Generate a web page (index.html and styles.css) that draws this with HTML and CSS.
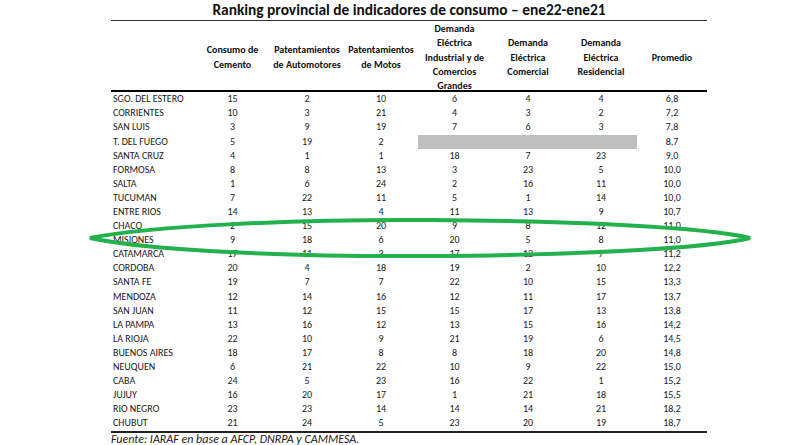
FILE: index.html
```html
<!DOCTYPE html>
<html lang="es">
<head>
<meta charset="utf-8">
<title>Ranking provincial de indicadores de consumo</title>
<link rel="stylesheet" href="styles.css">
</head>
<body>
<div class="page">
  <h1 class="title">Ranking provincial de indicadores de consumo – ene22-ene21</h1>
  <table class="rank">
    <colgroup>
      <col class="c-name"><col class="c-cem"><col class="c-aut"><col class="c-mot"><col class="c-ind"><col class="c-com"><col class="c-res"><col class="c-prom">
    </colgroup>
    <thead>
      <tr>
        <th><span class="hd"></span></th>
        <th><span class="hd">Consumo de Cemento</span></th>
        <th><span class="hd">Patentamientos de Automotores</span></th>
        <th><span class="hd">Patentamientos de Motos</span></th>
        <th><span class="hd">Demanda Eléctrica Industrial y de Comercios Grandes</span></th>
        <th><span class="hd">Demanda Eléctrica Comercial</span></th>
        <th><span class="hd">Demanda Eléctrica Residencial</span></th>
        <th><span class="hd">Promedio</span></th>
      </tr>
    </thead>
    <tbody>
      <tr><td>SGO. DEL ESTERO</td><td>15</td><td>2</td><td>10</td><td>6</td><td>4</td><td>4</td><td>6,8</td></tr>
      <tr><td>CORRIENTES</td><td>10</td><td>3</td><td>21</td><td>4</td><td>3</td><td>2</td><td>7,2</td></tr>
      <tr><td>SAN LUIS</td><td>3</td><td>9</td><td>19</td><td>7</td><td>6</td><td>3</td><td>7,8</td></tr>
      <tr><td>T. DEL FUEGO</td><td>5</td><td>19</td><td>2</td><td class="na" colspan="3"></td><td>8,7</td></tr>
      <tr><td>SANTA CRUZ</td><td>4</td><td>1</td><td>1</td><td>18</td><td>7</td><td>23</td><td>9,0</td></tr>
      <tr><td>FORMOSA</td><td>8</td><td>8</td><td>13</td><td>3</td><td>23</td><td>5</td><td>10,0</td></tr>
      <tr><td>SALTA</td><td>1</td><td>6</td><td>24</td><td>2</td><td>16</td><td>11</td><td>10,0</td></tr>
      <tr><td>TUCUMAN</td><td>7</td><td>22</td><td>11</td><td>5</td><td>1</td><td>14</td><td>10,0</td></tr>
      <tr><td>ENTRE RIOS</td><td>14</td><td>13</td><td>4</td><td>11</td><td>13</td><td>9</td><td>10,7</td></tr>
      <tr><td>CHACO</td><td>2</td><td>15</td><td>20</td><td>9</td><td>8</td><td>12</td><td>11,0</td></tr>
      <tr><td>MISIONES</td><td>9</td><td>18</td><td>6</td><td>20</td><td>5</td><td>8</td><td>11,0</td></tr>
      <tr><td>CATAMARCA</td><td>17</td><td>11</td><td>3</td><td>17</td><td>12</td><td>7</td><td>11,2</td></tr>
      <tr><td>CORDOBA</td><td>20</td><td>4</td><td>18</td><td>19</td><td>2</td><td>10</td><td>12,2</td></tr>
      <tr><td>SANTA FE</td><td>19</td><td>7</td><td>7</td><td>22</td><td>10</td><td>15</td><td>13,3</td></tr>
      <tr><td>MENDOZA</td><td>12</td><td>14</td><td>16</td><td>12</td><td>11</td><td>17</td><td>13,7</td></tr>
      <tr><td>SAN JUAN</td><td>11</td><td>12</td><td>15</td><td>15</td><td>17</td><td>13</td><td>13,8</td></tr>
      <tr><td>LA PAMPA</td><td>13</td><td>16</td><td>12</td><td>13</td><td>15</td><td>16</td><td>14,2</td></tr>
      <tr><td>LA RIOJA</td><td>22</td><td>10</td><td>9</td><td>21</td><td>19</td><td>6</td><td>14,5</td></tr>
      <tr><td>BUENOS AIRES</td><td>18</td><td>17</td><td>8</td><td>8</td><td>18</td><td>20</td><td>14,8</td></tr>
      <tr><td>NEUQUEN</td><td>6</td><td>21</td><td>22</td><td>10</td><td>9</td><td>22</td><td>15,0</td></tr>
      <tr><td>CABA</td><td>24</td><td>5</td><td>23</td><td>16</td><td>22</td><td>1</td><td>15,2</td></tr>
      <tr><td>JUJUY</td><td>16</td><td>20</td><td>17</td><td>1</td><td>21</td><td>18</td><td>15,5</td></tr>
      <tr><td>RIO NEGRO</td><td>23</td><td>23</td><td>14</td><td>14</td><td>14</td><td>21</td><td>18,2</td></tr>
      <tr><td>CHUBUT</td><td>21</td><td>24</td><td>5</td><td>23</td><td>20</td><td>19</td><td>18,7</td></tr>
    </tbody>
  </table>
  <p class="source">Fuente: IARAF en base a AFCP, DNRPA y CAMMESA.</p>
</div>
<svg class="highlight" width="789" height="445" viewBox="0 0 789 445" aria-hidden="true">
  <path d="M90,238 C150,226 300,219 430,220 C570,221 705,227 750,238 C705,249 570,255 430,256 C300,257 150,251 90,238 Z" fill="none" stroke="#22b14c" stroke-width="4"/>
</svg>
</body>
</html>
```

FILE: styles.css
```css
html, body {
  margin: 0;
  padding: 0;
  background: #ffffff;
}

body {
  position: relative;
  width: 789px;
  height: 445px;
  overflow: hidden;
  font-family: Carlito, Lato, "Noto Sans", sans-serif;
  color: #1a1a1a;
}

.page {
  width: 596px;
  margin-left: 111px;
  padding-top: 1px;
}

.title {
  margin: 0;
  height: 19px;
  line-height: 18px;
  font-size: 15.4px;
  font-weight: 700;
  text-align: center;
  border-bottom: 1px solid #333;
  color: #111;
}

.rank {
  width: 596px;
  table-layout: fixed;
  border-collapse: collapse;
  border-spacing: 0;
}

.c-name { width: 84px; }
.c-cem { width: 75px; }
.c-aut { width: 74px; }
.c-mot { width: 74px; }
.c-ind { width: 73px; }
.c-com { width: 74px; }
.c-res { width: 72px; }
.c-prom { width: 70px; }

.rank thead th {
  height: 68px;
  padding: 1px 0 0 0;
  font-size: 10px;
  font-weight: 700;
  text-align: center;
  vertical-align: middle;
  border-bottom: 2.5px solid #000;
  color: #111;
}

.hd {
  display: block;
  line-height: 14.25px;
  margin-bottom: -3px;
}

.rank tbody td {
  height: 14.1px;
  padding: 0;
  font-size: 10px;
  line-height: 14.1px;
  text-align: center;
  white-space: nowrap;
  color: #1a1a1a;
}

.rank tbody td:first-child {
  text-align: left;
  padding-left: 2px;
}

.rank tbody tr:last-child td {
  border-bottom: 2px solid #222;
}

.rank tbody td.na {
  background: #bfbfbf;
}

.source {
  margin: 0;
  padding-top: 0;
  font-size: 12px;
  line-height: 12px;
  font-style: italic;
  color: #1a1a1a;
}

.highlight {
  position: absolute;
  left: 0;
  top: 0;
  pointer-events: none;
}
```
